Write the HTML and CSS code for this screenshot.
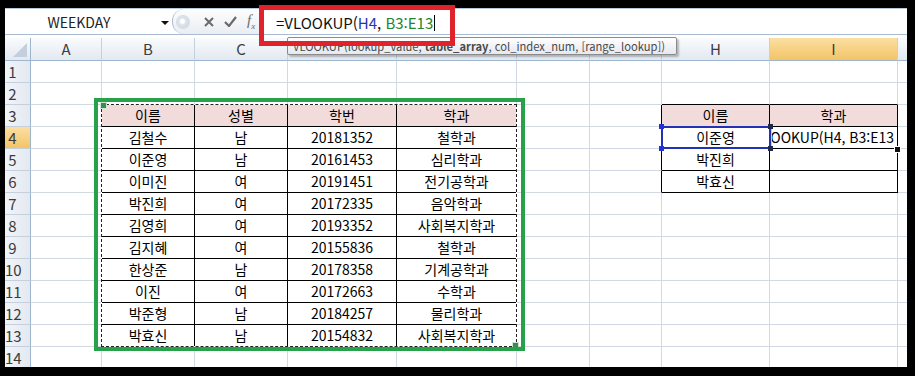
FILE: index.html
```html
<!DOCTYPE html>
<html lang="ko">
<head>
    <meta charset="UTF-8">
    <meta name="viewport" content="width=device-width, initial-scale=1.0">
    <title>VLOOKUP</title>
    <link rel="stylesheet" href="styles.css">
</head>
<body>
    <div class="window">
        <div class="formula-bar">
            <div class="name-box">
                <span class="name-text">WEEKDAY</span>
                <span class="arrow"></span>
            </div>
            <div class="fx-tools">
                <span class="grip"></span>
                <svg class="tool-x" width="10" height="10" viewBox="0 0 10 10"><path d="M1 1 L9 9 M9 1 L1 9" stroke="#6a6a6a" stroke-width="2" fill="none"/></svg>
                <svg class="tool-ok" width="13" height="11" viewBox="0 0 13 11"><path d="M1 6 L5 10 L12 1" stroke="#6a6a6a" stroke-width="2.2" fill="none"/></svg>
                <span class="tool-fx">f<sub>x</sub></span>
            </div>
            <div class="formula-input">=VLOOKUP(<span class="ref1">H4</span>, <span class="ref2">B3:E13</span><span class="caret"></span></div>
        </div>

        <div class="sheet-area">
            <div class="sheet">
                <div class="corner"></div><div class="ch">A</div><div class="ch">B</div><div class="ch">C</div><div class="ch">D</div><div class="ch">E</div><div class="ch">F</div><div class="ch">G</div><div class="ch">H</div><div class="ch on">I</div><div class="ch"></div>

                <div class="rh">1</div><div></div><div></div><div></div><div></div><div></div><div></div><div></div><div></div><div></div><div></div>
                <div class="rh">2</div><div></div><div class="bb"></div><div class="bb"></div><div class="bb"></div><div class="bb"></div><div></div><div></div><div class="bb"></div><div class="bb"></div><div></div>
                <div class="rh">3</div><div class="br"></div><div class="bx pk">이름</div><div class="bx pk">성별</div><div class="bx pk">학번</div><div class="bx pk">학과</div><div></div><div class="br"></div><div class="bx pk">이름</div><div class="bx pk">학과</div><div></div>
                <div class="rh on">4</div><div class="br"></div><div class="bx">김철수</div><div class="bx">남</div><div class="bx">20181352</div><div class="bx">철학과</div><div></div><div class="br"></div><div class="bx">이준영</div><div class="bx"><div class="edit-text"><span>=VLOOKUP(H4, B3:E13</span></div></div><div></div>
                <div class="rh">5</div><div class="br"></div><div class="bx">이준영</div><div class="bx">남</div><div class="bx">20161453</div><div class="bx">심리학과</div><div></div><div class="br"></div><div class="bx">박진희</div><div class="bx"></div><div></div>
                <div class="rh">6</div><div class="br"></div><div class="bx">이미진</div><div class="bx">여</div><div class="bx">20191451</div><div class="bx">전기공학과</div><div></div><div class="br"></div><div class="bx">박효신</div><div class="bx"></div><div></div>
                <div class="rh">7</div><div class="br"></div><div class="bx">박진희</div><div class="bx">여</div><div class="bx">20172335</div><div class="bx">음악학과</div><div></div><div></div><div></div><div></div><div></div>
                <div class="rh">8</div><div class="br"></div><div class="bx">김영희</div><div class="bx">여</div><div class="bx">20193352</div><div class="bx">사회복지학과</div><div></div><div></div><div></div><div></div><div></div>
                <div class="rh">9</div><div class="br"></div><div class="bx">김지혜</div><div class="bx">여</div><div class="bx">20155836</div><div class="bx">철학과</div><div></div><div></div><div></div><div></div><div></div>
                <div class="rh">10</div><div class="br"></div><div class="bx">한상준</div><div class="bx">남</div><div class="bx">20178358</div><div class="bx">기계공학과</div><div></div><div></div><div></div><div></div><div></div>
                <div class="rh">11</div><div class="br"></div><div class="bx">이진</div><div class="bx">여</div><div class="bx">20172663</div><div class="bx">수학과</div><div></div><div></div><div></div><div></div><div></div>
                <div class="rh">12</div><div class="br"></div><div class="bx">박준형</div><div class="bx">남</div><div class="bx">20184257</div><div class="bx">물리학과</div><div></div><div></div><div></div><div></div><div></div>
                <div class="rh">13</div><div class="br"></div><div class="bx">박효신</div><div class="bx">남</div><div class="bx">20154832</div><div class="bx">사회복지학과</div><div></div><div></div><div></div><div></div><div></div>
                <div class="rh">14</div><div></div><div></div><div></div><div></div><div></div><div></div><div></div><div></div><div></div><div></div>
            </div>

            <!-- copy marquee, references and the green note drawn over the sheet -->
            <div class="marquee"></div>
            <span class="knob knob-tl"></span>
            <span class="knob knob-br"></span>
            <div class="green-box"></div>
            <div class="ref-box">
                <span class="sq sq-tl"></span><span class="sq sq-bl"></span><span class="sq sq-tr"></span><span class="sq sq-br"></span>
            </div>
            <span class="fill-handle"></span>
        </div>
    </div>

    <div class="tooltip">VLOOKUP(lookup_value, <b>table_array</b>, col_index_num, [range_lookup])</div>
    <div class="red-box"></div>
</body>
</html>
```

FILE: styles.css
```css
html, body {
    margin: 0;
    padding: 0;
    background-color: #000;
}

body {
    position: relative;
    width: 915px;
    height: 376px;
    overflow: hidden;
    font-family: "Noto Sans CJK KR", "Noto Sans", sans-serif;
}

.window {
    margin: 8px 8px 0 5px;
    height: 359px;
    background-color: #fff;
    overflow: hidden;
}

/* formula bar */

.formula-bar {
    display: flex;
    height: 25px;
    border-top: 1px solid #b9c9dc;
    border-bottom: 1px solid #a9bbd1;
    margin-bottom: 3px;
}

.name-box {
    width: 167px;
    display: flex;
    align-items: center;
    background-color: #fff;
}

.name-text {
    flex: 1;
    text-align: center;
    font-size: 14px;
    color: #222;
}

.arrow {
    width: 0;
    height: 0;
    border-left: 4px solid transparent;
    border-right: 4px solid transparent;
    border-top: 4px solid #111;
    margin: 3px 3px 0 8px;
}

.fx-tools {
    width: 90px;
    box-sizing: border-box;
    display: flex;
    align-items: center;
    padding-left: 4px;
    background: linear-gradient(#fdfdfe, #e9edf3);
    border-left: 1px solid #aebcce;
    border-radius: 12px 0 0 12px;
}

.grip {
    width: 12px;
    height: 12px;
    border-radius: 50%;
    background: radial-gradient(circle at 45% 45%, #ffffff 20%, #dfe5ec 35%, #c3cdd9);
    box-shadow: 0 0 0 1px #d4dce6;
}

.tool-x {
    margin-left: 15px;
}

.tool-ok {
    margin-left: 10px;
}

.tool-fx {
    margin-left: 10px;
    font-family: "Liberation Serif", serif;
    font-style: italic;
    font-size: 15px;
    color: #6a6a6a;
    line-height: 1;
}

.tool-fx sub {
    font-size: 9px;
}

.formula-input {
    flex: 1;
    display: flex;
    align-items: center;
    padding: 2px 0 0 13px;
    border-left: 1px solid #b7c3d2;
    background-color: #fff;
    font-size: 15px;
    color: #111;
    white-space: pre;
}

.ref1 {
    color: #2334b4;
}

.ref2 {
    color: #21862f;
}

.caret {
    width: 1px;
    height: 16px;
    margin-left: 1px;
    background-color: #000;
}

/* sheet grid */

.sheet-area {
    position: relative;
}

.sheet {
    display: grid;
    grid-template-columns: 26px 71px 93px 93px 109px 120px 73px 72px 108px 128px 20px;
    grid-template-rows: 23px repeat(14, 22px);
}

.sheet > div {
    box-sizing: border-box;
    border-right: 1px solid #d3d9e3;
    border-bottom: 1px solid #d3d9e3;
    font-size: 14px;
    line-height: 21px;
    text-align: center;
    white-space: nowrap;
    overflow: hidden;
    color: #000;
}

.sheet > .br {
    border-right-color: #000;
}

.sheet > .bb {
    border-bottom-color: #000;
}

.sheet > .bx {
    border-right-color: #000;
    border-bottom-color: #000;
}

.sheet > .pk {
    background-color: #f2dcdb;
}

.sheet > .ch {
    background: linear-gradient(#f9fbfd, #e3e9f1);
    border-right-color: #c5d0dd;
    border-bottom-color: #9eb6ce;
    color: #3c3c3c;
    font-size: 15px;
    line-height: 22px;
}

.sheet > .rh {
    background: linear-gradient(90deg, #f2f5f9, #e3e9f1);
    border-right-color: #9eb6ce;
    border-bottom-color: #c5d0dd;
    color: #3c3c3c;
    font-size: 15px;
    padding-right: 10px;
}

.sheet > .on {
    background: linear-gradient(#fbdfa3, #f3c466);
}

.sheet > .corner {
    position: relative;
    background: linear-gradient(#f9fbfd, #e3e9f1);
    border-right-color: #9eb6ce;
    border-bottom-color: #9eb6ce;
}

.corner::after {
    content: "";
    position: absolute;
    right: 3px;
    bottom: 3px;
    border-left: 14px solid transparent;
    border-bottom: 14px solid #c3cfdd;
}

.edit-text {
    display: flex;
    justify-content: flex-end;
    height: 100%;
    overflow: hidden;
    border-left: 2px solid #e9d35b;
    padding-right: 3px;
}

/* overlays */

.marquee {
    position: absolute;
    left: 96px;
    top: 66px;
    width: 416px;
    height: 243px;
    box-sizing: border-box;
    border: 1px solid #fff;
}

.marquee::after {
    content: "";
    position: absolute;
    inset: -1px;
    border: 1px dashed #222;
}

.knob {
    position: absolute;
    width: 5px;
    height: 5px;
    background-color: #3d8a4f;
    border: 1px solid #cfe3d3;
}

.knob-tl {
    left: 95px;
    top: 64px;
}

.knob-br {
    left: 507px;
    top: 304px;
}

.green-box {
    position: absolute;
    left: 89px;
    top: 60px;
    width: 431px;
    height: 253px;
    box-sizing: border-box;
    border: 4px solid #27a14a;
}

.ref-box {
    position: absolute;
    left: 656px;
    top: 88px;
    width: 110px;
    height: 23px;
    box-sizing: border-box;
    border: 2px solid #2231b6;
}

.sq {
    position: absolute;
    width: 5px;
    height: 5px;
    background-color: #2231d8;
}

.sq-tl { left: -4px; top: -4px; }
.sq-bl { left: -4px; bottom: -4px; }
.sq-tr { right: -4px; top: -4px; background-color: #20284a; }
.sq-br { right: -4px; bottom: -4px; background-color: #20284a; }

.fill-handle {
    position: absolute;
    left: 889px;
    top: 108px;
    width: 5px;
    height: 5px;
    background-color: #111;
    border: 1px solid #fff;
}

.tooltip {
    position: absolute;
    left: 287px;
    top: 37px;
    width: 390px;
    height: 18px;
    box-sizing: border-box;
    padding-left: 5px;
    border: 1px solid #8a8a8a;
    border-radius: 2px;
    background: linear-gradient(#ffffff, #e6e8f0);
    box-shadow: 2px 2px 2px rgba(0, 0, 0, 0.25);
    font-size: 11.2px;
    line-height: 16px;
    color: #4a4a4a;
    white-space: nowrap;
    overflow: hidden;
}

.red-box {
    position: absolute;
    left: 259px;
    top: 5px;
    width: 196px;
    height: 41px;
    box-sizing: border-box;
    border: 5px solid #e0222b;
}
```
